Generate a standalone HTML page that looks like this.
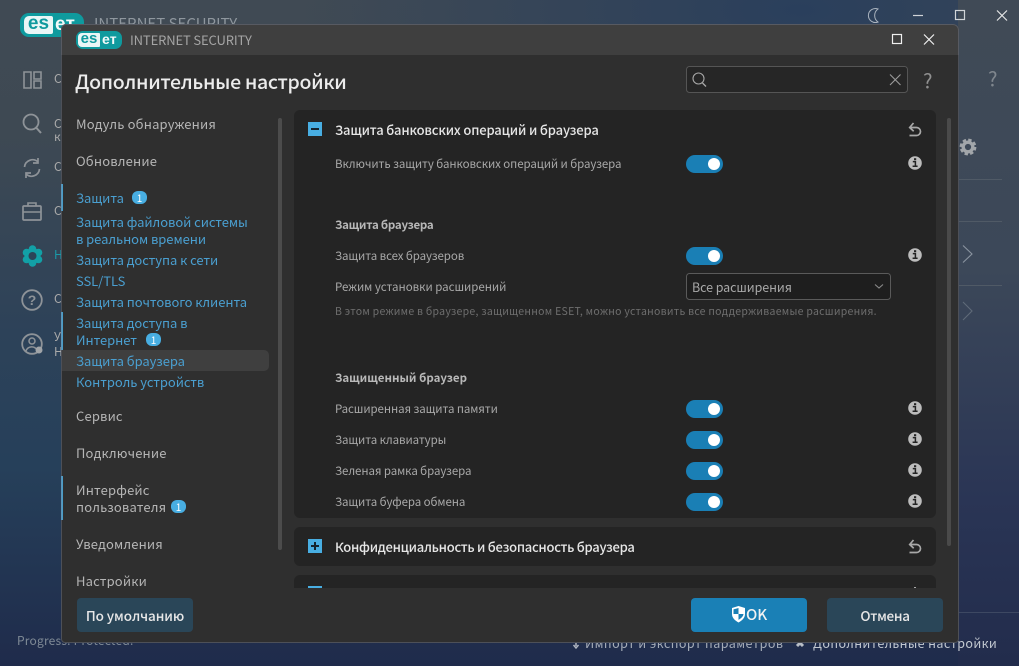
<!DOCTYPE html>
<html lang="ru"><head><meta charset="utf-8"><title>ESET</title>
<style>
*{box-sizing:border-box;margin:0;padding:0}
html,body{width:1019px;height:666px;overflow:hidden;background:#26324a}
body{position:relative;font-family:"Noto Sans CJK SC","Liberation Sans",sans-serif}
.a{position:absolute;white-space:nowrap}
#bg{left:0;top:0;width:1019px;height:666px;background:
radial-gradient(500px 200px at 800px 10px,#2a3f5c 0%,rgba(42,63,92,0) 100%),
linear-gradient(180deg,#404a54 0,#3e4953 20%,#2d4259 50%,#26405a 70%,#1f2b4b 100%)}
#bgr{left:958px;top:0;width:61px;height:666px;background:linear-gradient(180deg,#404a56 0,#3c4859 40%,#2a3555 75%,#222c4c 100%)}
#dlg{left:61px;top:24px;width:898px;height:619px;background:#2f2f2f;border-radius:5px 6px 4px 4px;overflow:hidden}
#edge{left:61px;top:24px;width:898px;height:619px;border:1px solid rgba(125,135,155,.38);border-radius:5px 6px 4px 4px;pointer-events:none}
#tb{left:0;top:0;width:898px;height:31px;background:#3f3f3f}
.nav{font-size:13px;line-height:17px;color:#b5b5b5;letter-spacing:.16px;left:76px}
.blue{color:#4a9fd0;letter-spacing:-.06px}
.badge{position:absolute;width:15px;height:13px;border-radius:6px;background:#48aee2;color:#fff;font-size:10px;line-height:13px;text-align:center;letter-spacing:0}
.bar{left:61px;width:2px;background:#4a9dc8}
.panel{left:294px;width:642px;background:#242424;border-radius:6px}
.lb{left:335px;font-size:11.5px;line-height:16px;color:#a8a8a8;letter-spacing:-.09px}
.b{font-weight:700;color:#b8b8b8}
.h{left:335px;font-size:13px;line-height:18px;color:#e6e6e6;letter-spacing:-.15px;font-weight:500}
.tog{left:686px;width:37px;height:18px;border-radius:9px;background:#1a7fb5}
.tog:after{content:"";position:absolute;left:22px;top:3px;width:12px;height:12px;border-radius:50%;background:#fff}
.btn{height:34px;border-radius:4px;color:#e8e8e8;font-size:13.5px;line-height:34px;text-align:center;letter-spacing:-.08px;font-weight:500}
.sq{left:308px;width:14px;height:14px;background:#48aee2}
svg{position:absolute;overflow:visible}
</style></head><body>
<div class="a" id="bg"></div><div class="a" id="bgr"></div>

<!-- behind-window app -->
<div class="a" style="left:20px;top:13px;width:64px;height:24px;border-radius:9px;background:#0f9a9e"></div>
<div class="a" style="left:24px;top:16px;width:29px;height:18px;border-radius:5px 2px 2px 5px;background:#e9f6f6;color:#0f9a9e;font:700 19px/16px 'Liberation Sans',sans-serif;text-align:center">es</div>
<div class="a" style="left:55px;top:15px;color:#f2fafa;font:700 19px/19px 'Liberation Sans',sans-serif">eт</div>
<div class="a" style="left:94px;top:14px;color:#8f979e;font-size:15px;line-height:20px">INTERNET SECURITY</div>
<svg style="left:0;top:0" width="1019" height="666" fill="none" stroke="#8e9398">
<path d="M24 72h7v16h-7zM34 72h7v7h-7zM34 81h7v7h-7z" stroke-width="1.6"/>
<circle cx="31" cy="122" r="7.5" stroke-width="1.8"/><path d="M36.500 128l4.500 5" stroke-width="2"/>
<path d="M24.500 167a8 8 0 0 1 13.500-5M39.500 169a8 8 0 0 1-13.500 5M38 158v5h-5M26 178v-5h5" stroke-width="1.700"/>
<rect x="23" y="206" width="18" height="14" rx="1" stroke-width="1.7"/><path d="M28 206v-3h8v3M23 212h18" stroke-width="1.6"/>
<g fill="#12a0a6" stroke="none"><circle cx="32.500" cy="256" r="8"/><circle cx="32.500" cy="249" r="3.800"/><circle cx="32.500" cy="263" r="3.800"/><circle cx="26.500" cy="252.500" r="3.800"/><circle cx="38.500" cy="252.500" r="3.800"/><circle cx="26.500" cy="259.500" r="3.800"/><circle cx="38.500" cy="259.500" r="3.800"/><circle cx="32.500" cy="256" r="4" fill="#2c4558"/></g>
<circle cx="32" cy="300" r="9.800" stroke-width="1.800"/>
<circle cx="32" cy="344" r="9.800" stroke-width="1.800"/><circle cx="32" cy="341" r="3" stroke-width="1.500"/><path d="M26 351a6 6 0 0 1 11-1" stroke-width="1.500"/>
<circle cx="39" cy="350" r="3.500" fill="#a0a4a8" stroke="none"/>
<path d="M878 9a7 7 0 1 0 0 13a8 8 0 0 1 0-13z" stroke="#aab3be" stroke-width="1"/>
<path d="M913 15.500h10" stroke="#d0d4d8" stroke-width="1.200"/>
<rect x="955.500" y="10.500" width="9" height="9" stroke="#d0d4d8" stroke-width="1.200"/>
<path d="M997 10.500l10 10M1007 10.500l-10 10" stroke="#e6e6e6" stroke-width="1.200"/>
<path d="M963 245.500l9 8.500-9 8.500" stroke="#8a94a0" stroke-width="1.100"/>
<path d="M963 302l9 9-9 9" stroke="#5f6a78" stroke-width="1.100"/>
<path d="M959 179.500h43M959 221.500h43M959 285.500h43" stroke="#505a66" stroke-width="1"/>
<path d="M959 612.500h60" stroke="#3d4862" stroke-width="1"/>
<circle cx="968" cy="147" r="4.800" stroke="#a2a6aa" stroke-width="3.400"/>
<circle cx="968" cy="147" r="7" stroke="#a2a6aa" stroke-width="2.800" stroke-dasharray="3.300 2.200"/>
<path d="M576 642v4M573.500 645l2.500 3 2.500-3" stroke="#b0b6c0" stroke-width="1.500"/>
<path d="M797 646l3-3 3 3" stroke="#b8bec6" stroke-width="3"/>
</svg>
<div class="a" style="left:988px;top:66px;color:#80878e;font-size:20px;line-height:24px">?</div>
<div class="a" style="left:17px;top:633px;color:#7f8a96;font-size:12px;line-height:16px;letter-spacing:.2px">Progress. Protected.</div>
<div class="a" style="left:585px;top:634px;color:#a6adb8;font-size:12.500px;line-height:17px;letter-spacing:.46px">Импорт и экспорт параметров</div>
<div class="a" style="left:813px;top:634px;color:#c2c8d0;font-size:12.500px;line-height:17px;letter-spacing:.38px">Дополнительные настройки</div>
<div class="a" style="left:54px;top:70px;color:#aaa;font-size:12px">С</div>
<div class="a" style="left:54px;top:115px;color:#aaa;font-size:12px">С</div>
<div class="a" style="left:54px;top:128px;color:#aaa;font-size:12px">к</div>
<div class="a" style="left:54px;top:158px;color:#aaa;font-size:12px">С</div>
<div class="a" style="left:54px;top:202px;color:#aaa;font-size:12px">С</div>
<div class="a" style="left:54px;top:246px;color:#1a9aa8;font-size:12px">Н</div>
<div class="a" style="left:54px;top:290px;color:#aaa;font-size:12px">С</div>
<div class="a" style="left:54px;top:328px;color:#aaa;font-size:12px">У</div>
<div class="a" style="left:54px;top:343px;color:#aaa;font-size:12px">Н</div>

<!-- dialog -->
<div class="a" id="dlg"><div class="a" id="tb"></div></div>
<div class="a" style="left:76px;top:31px;width:46px;height:18px;border-radius:7px;background:#0f9a9e"></div>
<div class="a" style="left:78px;top:33px;width:22px;height:14px;border-radius:4px 1px 1px 4px;background:#e9f6f6;color:#0f9a9e;font:700 15px/12px 'Liberation Sans',sans-serif;text-align:center">es</div>
<div class="a" style="left:102px;top:32px;color:#f2fafa;font:700 14px/15px 'Liberation Sans',sans-serif">eт</div>
<div class="a" style="left:130px;top:31px;color:#a5a5a5;font-size:13px;line-height:18px;letter-spacing:-.14px">INTERNET SECURITY</div>
<div class="a" style="left:75px;top:68px;color:#ececec;font-size:19.500px;line-height:26px;font-weight:500;letter-spacing:-.32px">Дополнительные настройки</div>

<svg style="left:0;top:0" width="1019" height="666" fill="none">
<rect x="892.500" y="34.500" width="9" height="9" stroke="#f0f0f0" stroke-width="1.200"/>
<path d="M924 34.500l10 10M934 34.500l-10 10" stroke="#f0f0f0" stroke-width="1.200"/>
<rect x="686.500" y="66.500" width="221" height="26" rx="3" fill="#262626" stroke="#555"/>
<circle cx="698.500" cy="78.500" r="5.500" stroke="#a8a8a8" stroke-width="1.100"/><path d="M702.500 83l3.500 3.500" stroke="#a8a8a8" stroke-width="1.300"/>
<path d="M890 74.500l10.500 10.500M900.500 74.500l-10.500 10.500" stroke="#9a9a9a" stroke-width="1.100"/>
</svg>
<div class="a" style="left:923px;top:68px;color:#909090;font-size:20px;line-height:24px">?</div>

<!-- sidebar scrollbar -->
<div class="a" style="left:278px;top:118px;width:4px;height:432px;border-radius:2px;background:#4c4c4c"></div>
<div class="a" style="left:947px;top:118px;width:4px;height:428px;border-radius:2px;background:#4a4a4a"></div>

<div class="a" style="left:62px;top:350px;width:207px;height:21px;border-radius:0 5px 5px 0;background:#3f3f3f"></div>
<div class="a bar" style="top:184px;height:27px"></div>
<div class="a bar" style="top:312px;height:38px"></div>
<div class="a bar" style="top:476px;height:44px"></div>

<div class="a nav" style="top:115px">Модуль обнаружения</div>
<div class="a nav" style="top:152px">Обновление</div>
<div class="a nav blue" style="top:189px">Защита</div><div class="badge" style="left:132px;top:191px">1</div>
<div class="a nav blue" style="top:213px">Защита файловой системы</div>
<div class="a nav blue" style="top:230px">в реальном времени</div>
<div class="a nav blue" style="top:251px">Защита доступа к сети</div>
<div class="a nav blue" style="top:272px">SSL/TLS</div>
<div class="a nav blue" style="top:293px">Защита почтового клиента</div>
<div class="a nav blue" style="top:314px">Защита доступа в</div>
<div class="a nav blue" style="top:331px">Интернет</div><div class="badge" style="left:146px;top:333px">1</div>
<div class="a nav blue" style="top:352px">Защита браузера</div>
<div class="a nav blue" style="top:373px">Контроль устройств</div>
<div class="a nav" style="top:407px">Сервис</div>
<div class="a nav" style="top:444px">Подключение</div>
<div class="a nav" style="top:481px">Интерфейс</div>
<div class="a nav" style="top:498px">пользователя</div><div class="badge" style="left:171px;top:500px">1</div>
<div class="a nav" style="top:535px">Уведомления</div>
<div class="a nav" style="top:572px">Настройки</div>

<!-- panels -->
<div class="a panel" style="top:110px;height:408px"></div>
<div class="a panel" style="top:527px;height:39px"></div>
<div class="a panel" style="top:575px;height:30px;border-radius:6px 6px 0 0"></div>
<div class="a" style="left:308px;top:586px;width:14px;height:2px;background:#48aee2"></div>
<div class="a" style="left:62px;top:588px;width:896px;height:54px;background:#2f2f2f"></div>
<div class="a" id="edge"></div>
<div class="a" style="left:914px;top:587px;width:2px;height:1px;background:#aaa"></div>

<div class="a sq" style="top:122px"><div class="a" style="left:3px;top:6px;width:8px;height:2px;background:#15242e"></div></div>
<div class="a sq" style="top:539px"><div class="a" style="left:3px;top:6px;width:8px;height:2px;background:#15242e"></div><div class="a" style="left:6px;top:3px;width:2px;height:8px;background:#15242e"></div></div>

<div class="a h" style="top:121px">Защита банковских операций и браузера</div>
<div class="a h" style="top:538px;letter-spacing:-.27px">Конфиденциальность и безопасность браузера</div>
<div class="a lb" style="top:156px">Включить защиту банковских операций и браузера</div>
<div class="a lb b" style="top:217px;letter-spacing:-.25px">Защита браузера</div>
<div class="a lb" style="top:248px">Защита всех браузеров</div>
<div class="a lb" style="top:279px;letter-spacing:-.03px">Режим установки расширений</div>
<div class="a lb" style="top:304px;font-size:10.500px;color:#6e6e6e;letter-spacing:.27px">В этом режиме в браузере, защищенном ESET, можно установить все поддерживаемые расширения.</div>
<div class="a lb b" style="top:370px;letter-spacing:0">Защищенный браузер</div>
<div class="a lb" style="top:401px">Расширенная защита памяти</div>
<div class="a lb" style="top:432px">Защита клавиатуры</div>
<div class="a lb" style="top:463px">Зеленая рамка браузера</div>
<div class="a lb" style="top:494px">Защита буфера обмена</div>

<div class="a tog" style="top:155px"></div>
<div class="a tog" style="top:247px"></div>
<div class="a tog" style="top:400px"></div>
<div class="a tog" style="top:431px"></div>
<div class="a tog" style="top:462px"></div>
<div class="a tog" style="top:493px"></div>

<svg style="left:0;top:0" width="1019" height="666" fill="none">
<g id="ic">
<circle cx="915" cy="163" r="6.800" fill="#bcbcbc"/><path d="M912.800 161.600h2.600v4M912.600 166.200h5" stroke="#242424" stroke-width="1.500"/><rect x="914" y="158.200" width="2.200" height="2" fill="#242424"/>
</g>
<g transform="translate(0 92)"><circle cx="915" cy="163" r="6.800" fill="#bcbcbc"/><path d="M912.800 161.600h2.600v4M912.600 166.200h5" stroke="#242424" stroke-width="1.500"/><rect x="914" y="158.200" width="2.200" height="2" fill="#242424"/></g>
<g transform="translate(0 245)"><circle cx="915" cy="163" r="6.800" fill="#bcbcbc"/><path d="M912.800 161.600h2.600v4M912.600 166.200h5" stroke="#242424" stroke-width="1.500"/><rect x="914" y="158.200" width="2.200" height="2" fill="#242424"/></g>
<g transform="translate(0 276)"><circle cx="915" cy="163" r="6.800" fill="#bcbcbc"/><path d="M912.800 161.600h2.600v4M912.600 166.200h5" stroke="#242424" stroke-width="1.500"/><rect x="914" y="158.200" width="2.200" height="2" fill="#242424"/></g>
<g transform="translate(0 307)"><circle cx="915" cy="163" r="6.800" fill="#bcbcbc"/><path d="M912.800 161.600h2.600v4M912.600 166.200h5" stroke="#242424" stroke-width="1.500"/><rect x="914" y="158.200" width="2.200" height="2" fill="#242424"/></g>
<g transform="translate(0 338)"><circle cx="915" cy="163" r="6.800" fill="#bcbcbc"/><path d="M912.800 161.600h2.600v4M912.600 166.200h5" stroke="#242424" stroke-width="1.500"/><rect x="914" y="158.200" width="2.200" height="2" fill="#242424"/></g>
<g stroke="#a8a8a8" stroke-width="1.700">
<path d="M913.500 123l-3.800 4.500 4 3.700M910 127.500h6.500a4 4 0 0 1 0 8h-7"/>
<path transform="translate(0 417)" d="M913.500 123l-3.800 4.500 4 3.700M910 127.500h6.500a4 4 0 0 1 0 8h-7"/>
</g>
<rect x="686.500" y="273.500" width="204" height="26" rx="3" fill="#1e1e1e" stroke="#5a5a5a"/>
<path d="M875 284.500l4 3.500 4-3.500" stroke="#8a8a8a" stroke-width="1.100"/>
<text x="32" y="305" font-size="14" font-weight="700" fill="#8e9398" text-anchor="middle" font-family="Liberation Sans,sans-serif">?</text>
</svg>
<div class="a lb" style="left:692px;top:279px;font-size:12.500px;color:#a8a8a8;letter-spacing:-.08px">Все расширения</div>

<!-- buttons -->
<div class="a btn" style="left:77px;top:598px;width:116px;background:#2a4658">По умолчанию</div>
<div class="a btn" style="left:691px;top:598px;width:116px;background:#1a80b6"></div>
<svg style="left:0;top:0" width="1019" height="666"><path d="M738.500 606l6.500 2v6c0 4-3 6.500-6.500 8.500c-3.500-2-6.500-4.500-6.500-8.500v-6z" fill="#fff"/><path d="M738.500 608v6h5c-.2 2.500-2.400 4.300-5 5.900v-5.900h-5v-4.600z" fill="#1a80b6"/></svg>
<div class="a" style="left:746px;top:604px;color:#f2f2f2;font-size:15px;line-height:22px;font-weight:500">OK</div>
<div class="a btn" style="left:827px;top:598px;width:116px;background:#2a4658;letter-spacing:-.3px">Отмена</div>
</body></html>
